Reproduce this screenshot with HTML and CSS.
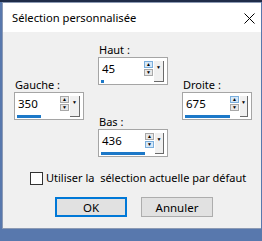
FILE: index.html
```html
<!DOCTYPE html>
<html lang="fr">
  <head>
    <meta charset="UTF-8" />
    <title>Sélection personnalisée</title>
    <link rel="stylesheet" href="styles.css">
  </head>
  <body>
    <div class="window">
      <div class="titlebar">
        <span class="title">Sélection personnalisée</span>
        <svg class="close" width="11" height="11" viewBox="0 0 11 11">
          <path d="M0.5 0.5 L10.5 10.5 M10.5 0.5 L0.5 10.5" stroke="#000" stroke-width="1" fill="none" />
        </svg>
      </div>
      <div class="content">
        <div class="fields">
          <div class="col side">
            <div class="field">
              <label>Gauche :</label>
              <div class="spin">
                <div class="value"><span>350</span><div class="bar" style="width: 24px"></div></div>
                <div class="arrows"><span class="up">▲</span><span class="down">▼</span></div>
                <div class="drop">▼</div>
              </div>
            </div>
          </div>
          <div class="col middle">
            <div class="field">
              <label>Haut :</label>
              <div class="spin">
                <div class="value"><span>45</span><div class="bar" style="width: 3px"></div></div>
                <div class="arrows"><span class="up hot">▲</span><span class="down">▼</span></div>
                <div class="drop">▼</div>
              </div>
            </div>
            <div class="field">
              <label>Bas :</label>
              <div class="spin">
                <div class="value"><span>436</span><div class="bar" style="width: 44px"></div></div>
                <div class="arrows"><span class="up">▲</span><span class="down hot">▼</span></div>
                <div class="drop">▼</div>
              </div>
            </div>
          </div>
          <div class="col side">
            <div class="field">
              <label>Droite :</label>
              <div class="spin">
                <div class="value"><span>675</span><div class="bar" style="width: 45px"></div></div>
                <div class="arrows"><span class="up hot">▲</span><span class="down">▼</span></div>
                <div class="drop">▼</div>
              </div>
            </div>
          </div>
        </div>
        <label class="check"><span class="checkbox"></span>Utiliser la&nbsp; sélection actuelle par défaut</label>
        <div class="buttons">
          <button type="button" class="btn primary">OK</button>
          <button type="button" class="btn">Annuler</button>
        </div>
      </div>
    </div>
  </body>
</html>
```

FILE: styles.css
```css
body {
  margin: 0;
  width: 262px;
  height: 241px;
  overflow: hidden;
  font-family: "Noto Sans", sans-serif;
  font-size: 11px;
  color: #000;
  background: linear-gradient(#1f2c48 0 2px, #5878ad 2px);
}

.window {
  margin: 2px 0 0 2px;
  width: 259px;
  height: 227px;
  box-sizing: border-box;
  border: 1px solid #8c9ab4;
  border-right: none;
  background-color: #f0f0f0;
}

.titlebar {
  height: 29px;
  background-color: #fff;
  display: flex;
  align-items: center;
  justify-content: space-between;
  padding: 0 6px 0 9px;
}

.title {
  font-size: 11.2px;
  line-height: 14px;
  margin-top: 1px;
}

.close {
  margin-top: 1px;
}

.content {
  padding: 11px 0 0 11px;
}

.fields {
  display: flex;
  gap: 14px;
}

.col {
  display: flex;
  flex-direction: column;
  width: 70px;
}

.side {
  padding-top: 35px;
}

.middle {
  gap: 30px;
}

.field label {
  display: block;
  height: 14px;
  line-height: 14px;
  padding-left: 1px;
}

.spin {
  display: flex;
  height: 28px;
  box-sizing: border-box;
  border: 1px solid #a5a5a5;
  background-color: #fff;
  padding: 3px 3px 0 1px;
}

.value {
  flex: 1;
  display: flex;
  flex-direction: column;
  padding-left: 2px;
}

.value span {
  font-size: 11.5px;
  line-height: 14px;
  margin-top: 1px;
}

.bar {
  height: 3px;
  margin-top: 4px;
  margin-left: -1px;
  background-color: #1c78c8;
}

.arrows {
  display: flex;
  flex-direction: column;
  gap: 1px;
  margin-right: 1px;
}

.arrows span {
  width: 9px;
  height: 7px;
  box-sizing: border-box;
  border: 1px solid #a8a8a8;
  background-color: #e8e8e8;
  font-size: 5px;
  line-height: 5px;
  text-align: center;
}

.arrows span.hot {
  background-color: #d6e8f8;
  border-color: #7aaedc;
}

.drop {
  width: 10px;
  height: 21px;
  box-sizing: border-box;
  border-right: 1px solid #6a6a6a;
  border-bottom: 1px solid #6a6a6a;
  background-color: #f0f0f0;
  font-size: 5px;
  line-height: 12px;
  text-align: center;
}

.check {
  display: flex;
  align-items: center;
  white-space: nowrap;
  margin: 14px 0 0 16px;
  line-height: 14px;
  font-size: 11px;
}

.checkbox {
  width: 13px;
  height: 13px;
  box-sizing: border-box;
  border: 1px solid #333;
  background-color: #fff;
  margin-right: 3px;
}

.buttons {
  display: flex;
  gap: 14px;
  margin: 12px 0 0 41px;
}

.btn {
  width: 72px;
  height: 20px;
  padding: 0;
  font-family: "Noto Sans", sans-serif;
  font-size: 11.5px;
  color: #000;
  background-color: #e1e1e1;
  border: 1px solid #adadad;
}

.btn.primary {
  border: 2px solid #0078d7;
}
```
